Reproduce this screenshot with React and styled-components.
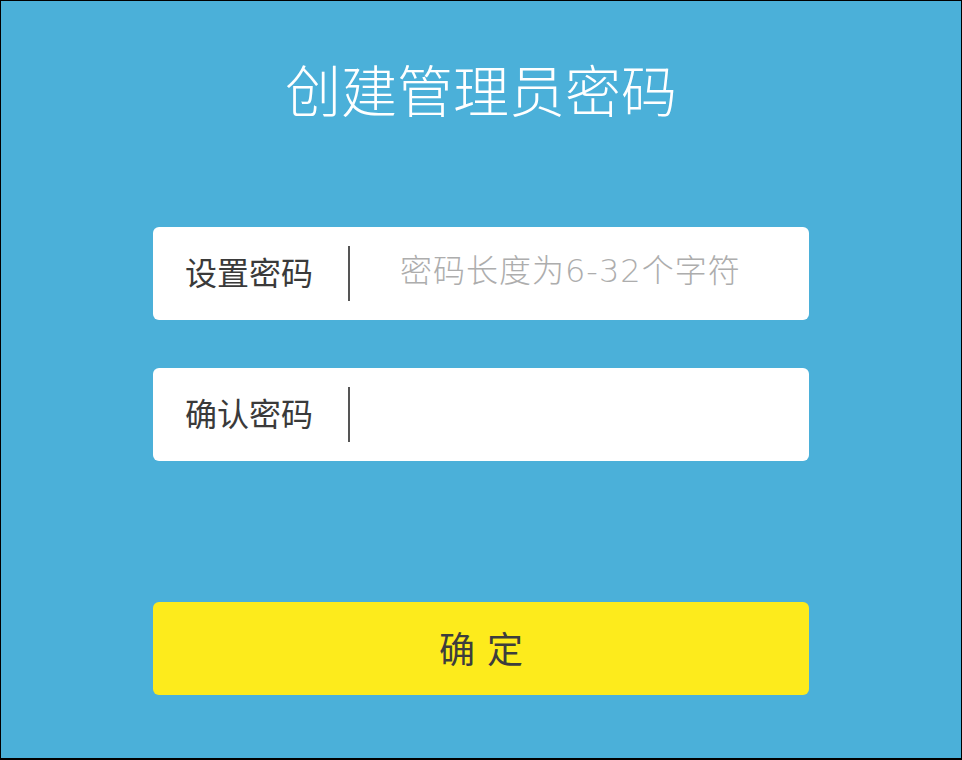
import React from 'react';
import styled, { createGlobalStyle } from 'styled-components';

const GlobalStyle = createGlobalStyle`
    html, body {
        margin: 0;
        padding: 0;
        background: #000;
    }
    body {
        font-family: "Noto Sans CJK SC", "Noto Sans", sans-serif;
    }
`

const Screen = styled.div`
    box-sizing: border-box;
    width: 962px;
    height: 760px;
    border: 1px solid #000;
    border-bottom-width: 2px;
    background: #4bb0d9;
    display: flex;
    flex-direction: column;
    align-items: center;
`

const Title = styled.h1`
    margin: 52px 0 0;
    height: 70px;
    line-height: 70px;
    font-size: 56px;
    font-weight: 300;
    color: #fff;
`

const Form = styled.form`
    width: 656px;
    margin-top: 104px;
    display: flex;
    flex-direction: column;
    gap: 48px;
`

const Field = styled.label`
    box-sizing: border-box;
    height: 93px;
    background: #fff;
    border-radius: 6px;
    display: flex;
    align-items: center;
    padding-left: 32px;
`

const Label = styled.span`
    width: 130px;
    margin-bottom: 6px;
    font-size: 32px;
    color: #3a3a3a;
    white-space: nowrap;
`

const Divider = styled.span`
    width: 2px;
    height: 55px;
    margin-left: 33px;
    background: #555;
`

const Input = styled.input`
    flex: 1;
    min-width: 0;
    border: none;
    outline: none;
    background: transparent;
    margin: 0 0 6px 50px;
    padding: 0;
    font-family: "DejaVu Sans", "Noto Sans CJK SC", sans-serif;
    font-size: 32px;
    font-weight: 300;
    letter-spacing: 1px;
    color: #333;

    &::placeholder {
        color: #adadad;
    }
`

const Submit = styled.button`
    height: 93px;
    margin-top: 93px;
    border: none;
    border-radius: 6px;
    background: #fdeb1c;
    font-family: "Noto Sans CJK SC", "Noto Sans", sans-serif;
    font-size: 36px;
    color: #3d3d3d;
    letter-spacing: 2px;
    padding: 0 0 4px 2px;
    cursor: pointer;
`

export default function App() {
    return (
        <React.Fragment>
            <GlobalStyle />
            <Screen>
                <Title>创建管理员密码</Title>
                <Form onSubmit={e => e.preventDefault()}>
                    <Field>
                        <Label>设置密码</Label>
                        <Divider />
                        <Input type="password" placeholder="密码长度为6-32个字符" />
                    </Field>
                    <Field>
                        <Label>确认密码</Label>
                        <Divider />
                        <Input type="password" />
                    </Field>
                    <Submit type="submit">确 定</Submit>
                </Form>
            </Screen>
        </React.Fragment>
    );
}
